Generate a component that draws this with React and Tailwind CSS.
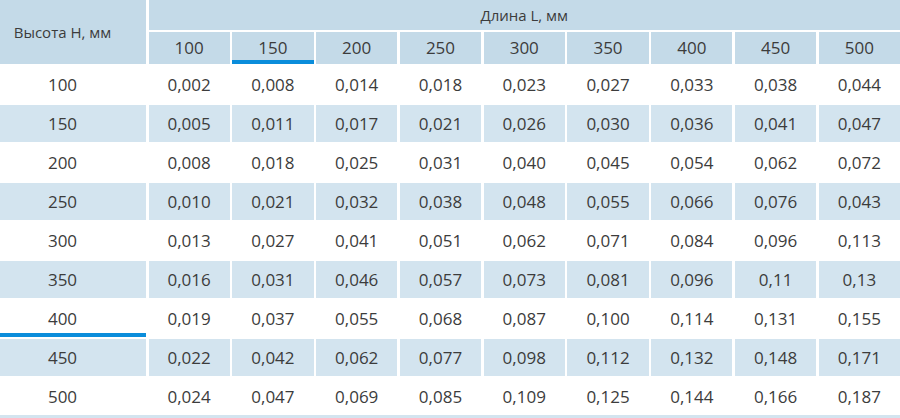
import React from 'react';

const lengths = ['100', '150', '200', '250', '300', '350', '400', '450', '500'];

const rows = [
  ['100', ['0,002', '0,008', '0,014', '0,018', '0,023', '0,027', '0,033', '0,038', '0,044']],
  ['150', ['0,005', '0,011', '0,017', '0,021', '0,026', '0,030', '0,036', '0,041', '0,047']],
  ['200', ['0,008', '0,018', '0,025', '0,031', '0,040', '0,045', '0,054', '0,062', '0,072']],
  ['250', ['0,010', '0,021', '0,032', '0,038', '0,048', '0,055', '0,066', '0,076', '0,043']],
  ['300', ['0,013', '0,027', '0,041', '0,051', '0,062', '0,071', '0,084', '0,096', '0,113']],
  ['350', ['0,016', '0,031', '0,046', '0,057', '0,073', '0,081', '0,096', '0,11', '0,13']],
  ['400', ['0,019', '0,037', '0,055', '0,068', '0,087', '0,100', '0,114', '0,131', '0,155']],
  ['450', ['0,022', '0,042', '0,062', '0,077', '0,098', '0,112', '0,132', '0,148', '0,171']],
  ['500', ['0,024', '0,047', '0,069', '0,085', '0,109', '0,125', '0,144', '0,166', '0,187']],
];

const App = () => (
  <div className="w-[900px] h-[418px] overflow-hidden bg-white text-[#3c3c3c] text-[17px] font-['Open_Sans',sans-serif]">
    <div className="grid grid-cols-[146px_repeat(9,minmax(0,1fr))] gap-x-[2.5px] gap-y-[2px]">
      <div className="row-span-2 bg-[#c4dae8] flex items-center justify-center pr-[21px] text-[15px]">
        Высота Н, мм
      </div>
      <div className="col-span-9 h-[30px] bg-[#c4dae8] flex items-center justify-center text-[15px]">
        Длина L, мм
      </div>
      {lengths.map((l) => (
        <div
          key={l}
          className={
            'h-[32px] bg-[#c4dae8] flex items-center justify-center ' +
            (l === '150' ? 'border-b-4 border-[#0a8ddb] pt-[4px]' : '')
          }
        >
          {l}
        </div>
      ))}
      {rows.map(([h, vals], i) => {
        const striped = i % 2 === 1;
        const bg = striped ? 'bg-[#d3e4ef]' : 'bg-white';
        return (
          <React.Fragment key={h}>
            <div
              className={
                'h-[37px] flex items-center justify-center pr-[21px] ' +
                bg +
                (h === '400' ? ' border-b-4 border-[#0a8ddb] pt-[4px]' : '')
              }
            >
              {h}
            </div>
            {vals.map((v, j) => (
              <div key={j} className={'h-[37px] flex items-center justify-center ' + bg}>
                {v}
              </div>
            ))}
          </React.Fragment>
        );
      })}
    </div>
    <div className="h-[3px] bg-[#d3e4ef]" />
  </div>
);

export default App;
